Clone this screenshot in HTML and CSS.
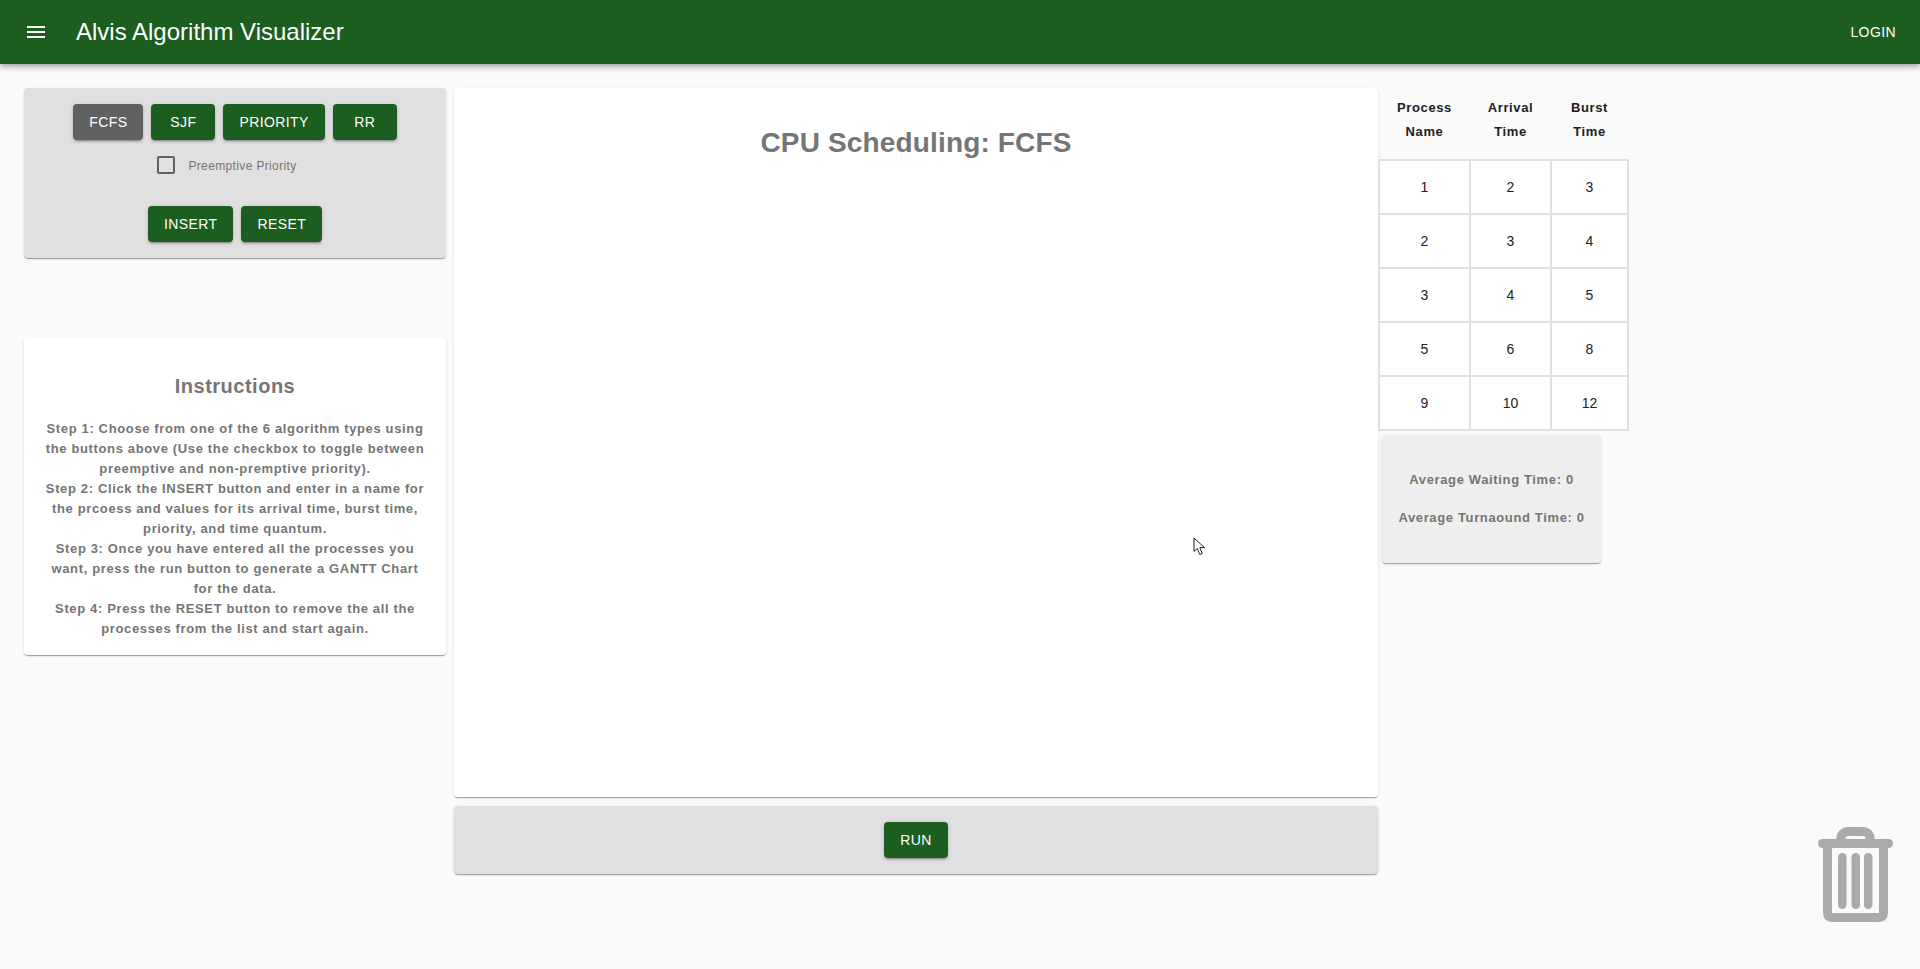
FILE: index.html
```html
<!DOCTYPE html>
<html>

<head>
  <meta charset="utf-8">
  <title>Alvis Algorithm Visualizer</title>
  <link rel="stylesheet" href="styles.css">
</head>

<body>
  <header class="appbar">
    <button class="menu-btn" aria-label="menu">
      <svg viewBox="0 0 24 24">
        <path d="M3 18h18v-2H3v2zm0-5h18v-2H3v2zm0-7v2h18V6H3z" />
      </svg>
    </button>
    <h1 class="app-title">Alvis Algorithm Visualizer</h1>
    <a class="login">LOGIN</a>
  </header>

  <main class="layout">
    <section class="left-col">
      <div class="paper controls">
        <div class="btn-row">
          <button class="btn btn-active">FCFS</button>
          <button class="btn">SJF</button>
          <button class="btn">PRIORITY</button>
          <button class="btn">RR</button>
        </div>
        <label class="check-row">
          <span class="checkbox"></span>
          <span class="check-label">Preemptive Priority</span>
        </label>
        <div class="btn-row">
          <button class="btn">INSERT</button>
          <button class="btn">RESET</button>
        </div>
      </div>

      <div class="paper instructions">
        <h2>Instructions</h2>
        <p>Step 1: Choose from one of the 6 algorithm types using the buttons above (Use the checkbox to toggle between preemptive and non-premptive priority).</p>
        <p>Step 2: Click the INSERT button and enter in a name for the prcoess and values for its arrival time, burst time, priority, and time quantum.</p>
        <p>Step 3: Once you have entered all the processes you want, press the run button to generate a GANTT Chart for the data.</p>
        <p>Step 4: Press the RESET button to remove the all the processes from the list and start again.</p>
      </div>
    </section>

    <section class="center-col">
      <div class="paper chart">
        <h2>CPU Scheduling: FCFS</h2>
      </div>
      <div class="paper run-bar">
        <button class="btn">RUN</button>
      </div>
    </section>

    <section class="right-col">
      <table class="process-table">
        <thead>
          <tr>
            <th class="col-name">Process<br>Name</th>
            <th class="col-arrival">Arrival<br>Time</th>
            <th class="col-burst">Burst<br>Time</th>
          </tr>
        </thead>
        <tbody>
          <tr><td>1</td><td>2</td><td>3</td></tr>
          <tr><td>2</td><td>3</td><td>4</td></tr>
          <tr><td>3</td><td>4</td><td>5</td></tr>
          <tr><td>5</td><td>6</td><td>8</td></tr>
          <tr><td>9</td><td>10</td><td>12</td></tr>
        </tbody>
      </table>
      <div class="paper stats">
        <p>Average Waiting Time: 0</p>
        <p>Average Turnaound Time: 0</p>
      </div>
    </section>
  </main>

  <svg class="trash" viewBox="0 0 75 96">
    <path d="M23 14V12C23 8 26 5.500 30 5.500H45C49 5.500 52 8 52 12V14" fill="none" stroke="#aaa" stroke-width="9" />
    <rect x="0" y="13" width="75" height="9" rx="4.5" fill="#aaa" />
    <path d="M9.5 20V87C9.5 90 11 91.500 14 91.500H61C64 91.500 65.500 90 65.500 87V20" fill="none" stroke="#aaa" stroke-width="9" />
    <rect x="20" y="27" width="8.500" height="56" rx="4.250" fill="#aaa" />
    <rect x="33.500" y="27" width="8.500" height="56" rx="4.250" fill="#aaa" />
    <rect x="46" y="27" width="8.500" height="56" rx="4.250" fill="#aaa" />
  </svg>

  <svg class="cursor" viewBox="0 0 14 19">
    <path d="M1 1V14.500L4.300 11.500L6.800 17.500L9.300 16.400L6.800 10.600H11.500Z" fill="#fff" stroke="#222" stroke-width="1" stroke-linejoin="round" />
  </svg>
</body>

</html>
```

FILE: styles.css
```css
* {
  box-sizing: border-box;
  margin: 0;
  padding: 0;
}

body {
  background: #fafafa;
  font-family: "Liberation Sans", Arial, sans-serif;
  height: 969px;
  overflow: hidden;
  position: relative;
}

.appbar {
  display: flex;
  align-items: center;
  height: 64px;
  padding: 0 24px;
  background: #1b5e20;
  color: #fff;
  box-shadow: 0 2px 4px -1px rgba(0, 0, 0, .2), 0 4px 5px 0 rgba(0, 0, 0, .14), 0 1px 10px 0 rgba(0, 0, 0, .12);
}

.menu-btn {
  width: 24px;
  height: 24px;
  margin-right: 28px;
  background: none;
  border: 0;
}

.menu-btn svg {
  display: block;
  fill: #fff;
}

.app-title {
  flex: 1;
  font-size: 24px;
  font-weight: 400;
}

.login {
  font-size: 14px;
  letter-spacing: .4px;
}

.layout {
  display: flex;
  align-items: flex-start;
  padding: 24px 0 0 24px;
}

.paper {
  border-radius: 4px;
  box-shadow: 0 2px 1px -1px rgba(0, 0, 0, .2), 0 1px 1px 0 rgba(0, 0, 0, .14), 0 1px 3px 0 rgba(0, 0, 0, .12);
}

.left-col {
  width: 422px;
  margin-right: 8px;
}

.controls {
  height: 170px;
  padding-top: 16px;
  background: #e0e0e0;
}

.btn-row {
  display: flex;
  justify-content: center;
  gap: 8px;
}

.btn {
  min-width: 64px;
  height: 36px;
  padding: 0 16px;
  border: 0;
  border-radius: 4px;
  background: #1b5e20;
  color: #fff;
  font-family: inherit;
  font-size: 14px;
  letter-spacing: .4px;
  box-shadow: 0 3px 1px -2px rgba(0, 0, 0, .2), 0 2px 2px 0 rgba(0, 0, 0, .14), 0 1px 5px 0 rgba(0, 0, 0, .12);
}

.btn-active {
  background: #616161;
}

.check-row {
  display: flex;
  justify-content: center;
  align-items: center;
  gap: 13px;
  height: 18px;
  margin: 16px 0 32px;
  padding-right: 16px;
}

.checkbox {
  width: 18px;
  height: 18px;
  border: 2px solid #616161;
  border-radius: 2px;
}

.check-label {
  margin-top: 2px;
  font-size: 12px;
  letter-spacing: .36px;
  color: #757575;
}

.instructions {
  height: 317px;
  margin-top: 80px;
  padding: 36px 18px 0;
  background: #fff;
  color: #757575;
  text-align: center;
}

.instructions h2 {
  margin-bottom: 21px;
  font-size: 20px;
  line-height: 24px;
  letter-spacing: .5px;
}

.instructions p {
  font-size: 13px;
  font-weight: 700;
  line-height: 20px;
  letter-spacing: .64px;
}

.center-col {
  width: 924px;
}

.chart {
  height: 709px;
  padding-top: 38px;
  background: #fff;
  text-align: center;
}

.chart h2 {
  font-size: 28px;
  line-height: 34px;
  letter-spacing: .15px;
  color: #757575;
}

.run-bar {
  display: flex;
  justify-content: center;
  height: 68px;
  margin-top: 9px;
  padding-top: 16px;
  background: #e0e0e0;
}

.right-col {
  width: 251px;
}

.process-table {
  width: 251px;
  table-layout: fixed;
  border-collapse: collapse;
  font-size: 14px;
  text-align: center;
  color: #212121;
}

.process-table th {
  height: 72px;
  padding-bottom: 7px;
  font-size: 13px;
  line-height: 24px;
  letter-spacing: .6px;
  color: #212121;
}

.col-name {
  width: 91px;
}

.col-arrival {
  width: 81px;
}

.process-table td {
  height: 54px;
  background: #fff;
  border: 2px solid #e0e0e0;
}

.stats {
  width: 219px;
  height: 128px;
  margin: 4px 0 0 4px;
  padding-top: 35px;
  background: #eee;
  color: #757575;
  text-align: center;
}

.stats p {
  margin-bottom: 18px;
  font-size: 13px;
  font-weight: 700;
  line-height: 20px;
  letter-spacing: .64px;
}

.trash {
  position: absolute;
  left: 1818px;
  top: 826px;
  width: 75px;
  height: 96px;
}

.cursor {
  position: absolute;
  left: 1193px;
  top: 537px;
  width: 14px;
  height: 19px;
}
```
